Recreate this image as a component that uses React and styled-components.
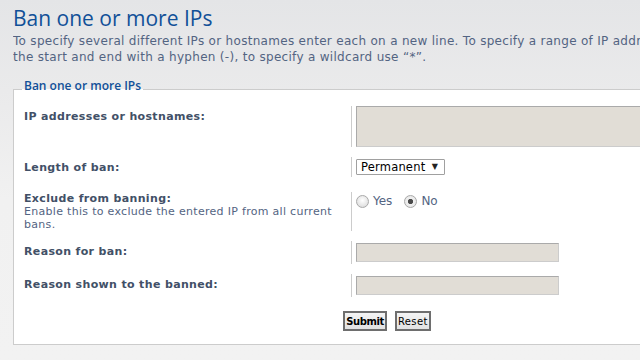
import React from "react";
import styled, { createGlobalStyle } from "styled-components";

const Global = createGlobalStyle`
  html, body { margin: 0; padding: 0; }
  body {
    width: 640px;
    height: 360px;
    overflow: hidden;
    background: linear-gradient(#e4e5e7 0px, #eaeaeb 90px, #f1f1f1 200px, #f2f2f2 360px);
    font-family: "DejaVu Sans", Verdana, sans-serif;
  }
`;

const Page = styled.main`
  width: 748px;
  padding: 0 0 0 13px;
`;

const Title = styled.h1`
  margin: 0;
  padding-top: 5px;
  font-family: "Open Sans", "DejaVu Sans", sans-serif;
  font-weight: 400;
  font-size: 21px;
  line-height: 26px;
  color: #115098;
`;

const Intro = styled.p`
  margin: 2px 0 0;
  width: 627px;
  overflow: hidden;
  font-size: 12px;
  letter-spacing: 0.3px;
  line-height: 16px;
  color: #536482;
  white-space: nowrap;
`;

const Fieldset = styled.fieldset`
  margin: 15px 0 0;
  padding: 8px 10px 13px;
  border: 1px solid #cccccc;
  background: #ffffff;
  min-inline-size: 0;
`;

const Legend = styled.legend`
  margin-left: -2px;
  padding: 0 2px 6px;
  font-family: "Open Sans", "DejaVu Sans", sans-serif;
  font-weight: 600;
  font-size: 12px;
  line-height: 12px;
  color: #115098;
`;

const Rows = styled.div`
  display: flex;
  flex-direction: column;
  gap: 10px;
`;

const Row = styled.dl`
  display: flex;
  margin: ${(p) => p.$extraTop || 0}px 0 0;
`;

const Term = styled.dt`
  width: 327px;
  flex: none;
  padding-top: ${(p) => (p.$tight ? 1 : 4)}px;
  font-size: 11px;
  line-height: 13px;
`;

const Label = styled.label`
  display: block;
  font-weight: bold;
  letter-spacing: 0.35px;
  line-height: ${(p) => (p.$short ? 12 : 13)}px;
  color: #425067;
`;

const Explain = styled.span`
  display: block;
  padding-right: 2px;
  font-size: 11px;
  letter-spacing: 0.3px;
  line-height: 13px;
  font-weight: normal;
  color: #536482;
`;

const Def = styled.dd`
  margin: 0;
  padding: ${(p) => p.$pad || 0}px 0 ${(p) => p.$pad || 0}px 4px;
  border-left: 1px solid #cccccc;
  display: flex;
  align-items: flex-start;
  gap: 12px;
`;

const TextArea = styled.textarea`
  box-sizing: border-box;
  width: 400px;
  height: 41px;
  margin: 0;
  padding: 2px;
  resize: none;
  background: #e1ddd6;
  border: 1px solid;
  border-color: #aaaaaa #cccccc #cccccc #aaaaaa;
  font: 11px "DejaVu Sans", sans-serif;
`;

const TextInput = styled.input`
  box-sizing: border-box;
  width: 203px;
  height: 19px;
  margin: 0;
  padding: 1px 2px;
  background: #e1ddd6;
  border: 1px solid;
  border-color: #aaaaaa #cccccc #cccccc #aaaaaa;
  font: 11px "DejaVu Sans", sans-serif;
`;

const SelectBox = styled.div`
  box-sizing: border-box;
  width: 89px;
  height: 16px;
  display: flex;
  align-items: center;
  justify-content: space-between;
  padding: 0 6px 0 4px;
  border: 1px solid #a0a0a0;
  border-radius: 1px;
  background: #ffffff;
  font-size: 11.5px;
  letter-spacing: 0.2px;
  color: #000000;
`;

const Arrow = styled.span`
  font-size: 8px;
  line-height: 8px;
  color: #222222;
`;

const RadioLabel = styled.label`
  display: flex;
  align-items: center;
  gap: 4px;
  padding-top: 3px;
  font-size: 12px;
  line-height: 13px;
  color: #536482;
`;

const Radio = styled.input.attrs({ type: "radio" })`
  appearance: none;
  box-sizing: border-box;
  width: 13px;
  height: 13px;
  margin: 0;
  border-radius: 50%;
  border: 1px solid #a9a9a9;
  background: radial-gradient(circle at 50% 40%, #ffffff 0, #e6e6e6 60%, #d4d4d4 100%);
  &:checked {
    background: radial-gradient(circle, #4a4a4a 0, #4a4a4a 2.2px, #f0f0f0 3px, #e2e2e2 100%);
  }
`;

const Buttons = styled.div`
  display: flex;
  justify-content: center;
  gap: 8px;
  margin-top: 14px;
`;

const Button = styled.button`
  box-sizing: border-box;
  height: 20px;
  padding: 0 1px;
  border: 2px solid #6e6e6e;
  background: linear-gradient(#f4f4f4, #e2e2e2);
  font-family: "DejaVu Sans", sans-serif;
  font-size: 10px;
  font-weight: ${(p) => (p.$primary ? "bold" : "normal")};
  color: #000000;
  letter-spacing: ${(p) => (p.$primary ? -0.4 : 0.4)}px;
`;

export default function App() {
  return (
    <>
      <Global />
      <Page>
        <Title>Ban one or more IPs</Title>
        <Intro>
          To specify several different IPs or hostnames enter each on a new line. To specify a range of IP addresses separate
          <br />
          the start and end with a hyphen (-), to specify a wildcard use “*”.
        </Intro>
        <Fieldset>
          <Legend>Ban one or more IPs</Legend>
          <Rows>
            <Row>
              <Term>
                <Label>IP addresses or hostnames:</Label>
              </Term>
              <Def>
                <TextArea />
              </Def>
            </Row>
            <Row>
              <Term>
                <Label>Length of ban:</Label>
              </Term>
              <Def $pad={2}>
                <SelectBox>
                  <span>Permanent</span>
                  <Arrow>▼</Arrow>
                </SelectBox>
              </Def>
            </Row>
            <Row $extraTop={5}>
              <Term $tight>
                <Label $short>Exclude from banning:</Label>
                <Explain>
                  Enable this to exclude the entered IP from all current bans.
                </Explain>
              </Term>
              <Def>
                <RadioLabel>
                  <Radio name="exclude" />
                  Yes
                </RadioLabel>
                <RadioLabel>
                  <Radio name="exclude" defaultChecked />
                  No
                </RadioLabel>
              </Def>
            </Row>
            <Row>
              <Term>
                <Label>Reason for ban:</Label>
              </Term>
              <Def $pad={2}>
                <TextInput />
              </Def>
            </Row>
            <Row>
              <Term>
                <Label>Reason shown to the banned:</Label>
              </Term>
              <Def $pad={2}>
                <TextInput />
              </Def>
            </Row>
          </Rows>
          <Buttons>
            <Button $primary>Submit</Button>
            <Button>Reset</Button>
          </Buttons>
        </Fieldset>
      </Page>
    </>
  );
}
